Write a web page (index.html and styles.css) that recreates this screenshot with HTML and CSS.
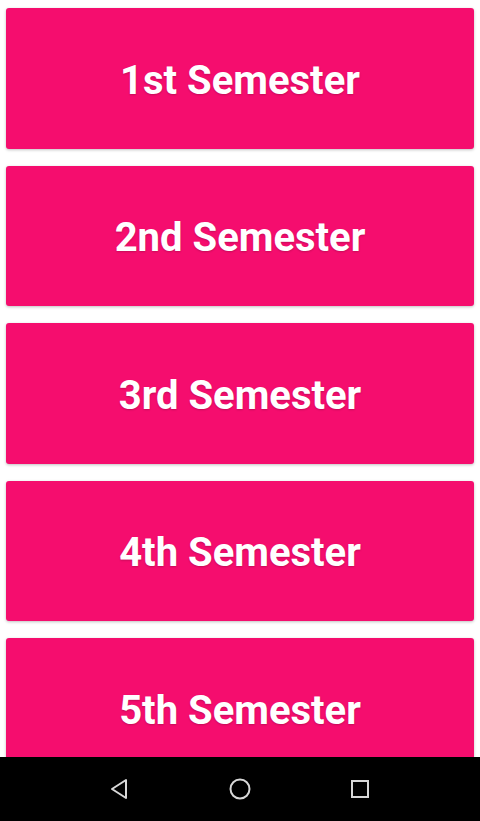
FILE: index.html
```html
<!DOCTYPE html>
<html>
<head>
<meta charset="utf-8">
<link rel="stylesheet" href="styles.css">
</head>
<body>
<div class="screen">
  <div class="list">
    <div class="card"><span>1st Semester</span></div>
    <div class="card"><span>2nd Semester</span></div>
    <div class="card"><span>3rd Semester</span></div>
    <div class="card"><span>4th Semester</span></div>
    <div class="card"><span>5th Semester</span></div>
  </div>
  <div class="navbar">
    <svg class="nav-icon" width="24" height="24" viewBox="0 0 24 24"><path d="M18 3 L18 21 L4 12 Z" fill="none" stroke="#d8d8d8" stroke-width="2" stroke-linejoin="round"/></svg>
    <svg class="nav-icon" width="24" height="24" viewBox="0 0 24 24"><circle cx="12" cy="12" r="9.5" fill="none" stroke="#d8d8d8" stroke-width="2"/></svg>
    <svg class="nav-icon" width="24" height="24" viewBox="0 0 24 24"><rect x="4" y="4" width="16" height="16" fill="none" stroke="#d8d8d8" stroke-width="2"/></svg>
  </div>
</div>
</body>
</html>
```
FILE: styles.css
```css
html, body {
  margin: 0;
  padding: 0;
  background: #ffffff;
}
.screen {
  width: 480px;
  height: 821px;
  display: flex;
  flex-direction: column;
  overflow: hidden;
}
.list {
  flex: 1;
  overflow: hidden;
  display: flex;
  flex-direction: column;
  gap: 17px;
  padding: 8px 6px 0 6px;
}
.card {
  flex: 0 0 140.5px;
  background: #f50d6e;
  border-radius: 3px;
  box-shadow: 0 1px 3px rgba(0,0,0,0.25);
  display: flex;
  align-items: center;
  justify-content: center;
}
.card span {
  font-family: Roboto, "Noto Sans", sans-serif;
  font-weight: 700;
  font-size: 40px;
  line-height: 1;
  padding-top: 5px;
  color: #ffffff;
  text-shadow: 0 1px 2px rgba(0,0,0,0.2);
}
.navbar {
  flex: 0 0 64px;
  background: #000000;
  display: flex;
  align-items: center;
  justify-content: center;
  gap: 96px;
}
.nav-icon {
  display: block;
}
```
